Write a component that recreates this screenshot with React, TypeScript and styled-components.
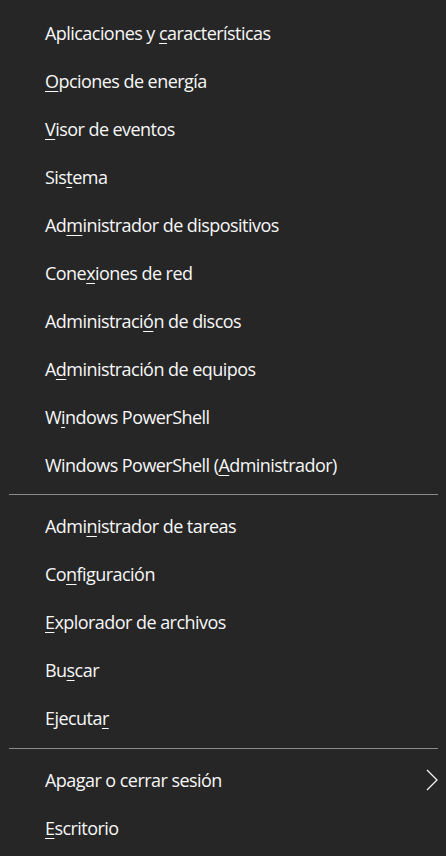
import React from "react";
import styled, { createGlobalStyle } from "styled-components";

const Global = createGlobalStyle`
  html, body {
    margin: 0;
    padding: 0;
    background: #262626;
  }
  body {
    font-family: "Open Sans", "Noto Sans", sans-serif;
  }
`;

const Menu = styled.nav`
  width: 446px;
  height: 856px;
  box-sizing: border-box;
  background: #262626;
  padding-top: 9px;
  display: flex;
  flex-direction: column;
  overflow: hidden;
`;

const Item = styled.div`
  height: 48px;
  box-sizing: border-box;
  padding-bottom: 1px;
  display: flex;
  align-items: center;
  justify-content: space-between;
  padding-left: 45px;
  padding-right: 8px;
  color: #f7f7f7;
  font-size: 18px;
  letter-spacing: -0.55px;
  white-space: nowrap;
  cursor: default;
`;

const Label = styled.span`
  line-height: 20px;
`;

const Key = styled.span`
  text-decoration: underline;
  text-decoration-thickness: 1px;
  text-underline-offset: 3px;
`;

const Separator = styled.hr<{ $top: number }>`
  border: none;
  height: 1px;
  background: #8a8a8a;
  margin: ${(p) => p.$top}px 8px 7px 9px;
`;

const ChevronBox = styled.span`
  display: flex;
  align-items: center;
  padding-top: 1px;
`;

const Chevron = () => (
  <ChevronBox>
    <svg width="12" height="22" viewBox="0 0 12 22" aria-hidden="true">
      <polyline
        points="1,1 11,11 1,21"
        fill="none"
        stroke="#f2f2f2"
        strokeWidth="1.3"
        strokeLinejoin="miter"
      />
    </svg>
  </ChevronBox>
);

type Entry = { pre: string; key: string; post: string; sub?: boolean };

const group1: Entry[] = [
  { pre: "Aplicaciones y ", key: "c", post: "aracterísticas" },
  { pre: "", key: "O", post: "pciones de energía" },
  { pre: "", key: "V", post: "isor de eventos" },
  { pre: "Sis", key: "t", post: "ema" },
  { pre: "Ad", key: "m", post: "inistrador de dispositivos" },
  { pre: "Cone", key: "x", post: "iones de red" },
  { pre: "Administraci", key: "ó", post: "n de discos" },
  { pre: "A", key: "d", post: "ministración de equipos" },
  { pre: "W", key: "i", post: "ndows PowerShell" },
  { pre: "Windows PowerShell (", key: "A", post: "dministrador)" },
];

const group2: Entry[] = [
  { pre: "Admi", key: "n", post: "istrador de tareas" },
  { pre: "Co", key: "n", post: "figuración" },
  { pre: "", key: "E", post: "xplorador de archivos" },
  { pre: "Bu", key: "s", post: "car" },
  { pre: "Ejecuta", key: "r", post: "" },
];

const group3: Entry[] = [
  { pre: "Apa", key: "g", post: "ar o cerrar sesión", sub: true },
  { pre: "", key: "E", post: "scritorio" },
];

const Row = ({ e }: { e: Entry }) => (
  <Item role="menuitem">
    <Label>
      {e.pre}
      <Key>{e.key}</Key>
      {e.post}
    </Label>
    {e.sub && <Chevron />}
  </Item>
);

export default function App() {
  return (
    <>
      <Global />
      <Menu role="menu">
        {group1.map((e, i) => (
          <Row key={"a" + i} e={e} />
        ))}
        <Separator $top={5} />
        {group2.map((e, i) => (
          <Row key={"b" + i} e={e} />
        ))}
        <Separator $top={6} />
        {group3.map((e, i) => (
          <Row key={"c" + i} e={e} />
        ))}
      </Menu>
    </>
  );
}
